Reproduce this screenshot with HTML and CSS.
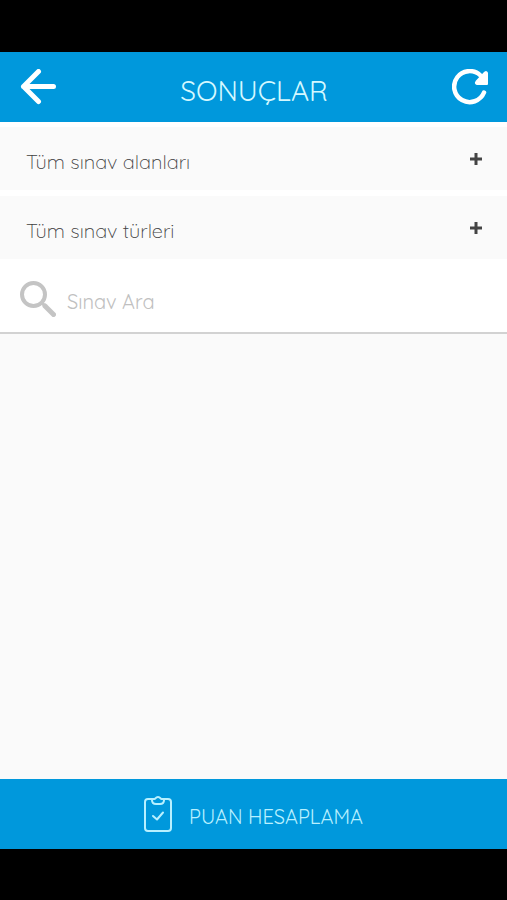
FILE: index.html
```html
<!DOCTYPE html>
<html lang="tr">
<head>
<meta charset="utf-8">
<meta name="viewport" content="width=device-width, initial-scale=1">
<title>Sonuçlar</title>
<link rel="stylesheet" href="styles.css">
</head>
<body>
<header class="topbar">
  <button class="icon-button" type="button" aria-label="Geri">
    <svg width="36" height="36" viewBox="0 0 36 36" fill="none" stroke="currentColor" stroke-width="5" stroke-linecap="round" stroke-linejoin="round"><path d="M33.500 17.500H3.500M18.500 2.500L3.500 17.500l15 15"/></svg>
  </button>
  <h1 class="title">SONUÇLAR</h1>
  <button class="icon-button" type="button" aria-label="Yenile">
    <svg width="36" height="36" viewBox="0 0 36 36"><path d="M32 23.500A15.500 15.500 0 1 1 28.500 6.500" fill="none" stroke="currentColor" stroke-width="4.500" stroke-linecap="round"/><path d="M35 4V15H25Q23 14.500 24.500 12.500L33 3.500Q34.500 2.500 35 4Z" fill="currentColor" stroke="currentColor" stroke-width="2" stroke-linejoin="round"/></svg>
  </button>
</header>
<main class="content">
  <div class="filters">
    <button class="filter" type="button"><span>Tüm sınav alanları</span><svg class="plus" width="12" height="12" viewBox="0 0 12 12"><path d="M6 0v12M0 6h12"/></svg></button>
    <button class="filter" type="button"><span>Tüm sınav türleri</span><svg class="plus" width="12" height="12" viewBox="0 0 12 12"><path d="M6 0v12M0 6h12"/></svg></button>
  </div>
  <label class="search">
    <svg width="36" height="36" viewBox="0 0 36 36" fill="none" stroke="currentColor"><circle cx="13.500" cy="13.500" r="11.500" stroke-width="4"/><path d="M22 22l3 3" stroke-width="3"/><path d="M25 25l8.500 8.500" stroke-width="5" stroke-linecap="round"/></svg>
    <input class="search-input" type="text" placeholder="Sınav Ara" aria-label="Sınav Ara">
  </label>
</main>
<footer class="footer">
  <button class="calculate" type="button">
    <svg width="28" height="36" viewBox="0 0 28 36" fill="none" stroke="currentColor" stroke-width="2" stroke-linecap="round" stroke-linejoin="round"><path d="M8 3H4a3 3 0 0 0-3 3v26a3 3 0 0 0 3 3h20a3 3 0 0 0 3-3V6a3 3 0 0 0-3-3h-4"/><path d="M8 3h2.500c1 0 1-2 3.500-2s2.500 2 3.500 2H20v1c0 2.500-1.500 4-4 4h-4c-2.500 0-4-1.500-4-4z"/><path d="M9 20l4 3.500 6-7"/></svg>
    <span>PUAN HESAPLAMA</span>
  </button>
</footer>
</body>
</html>
```
FILE: styles.css
```css
* {
  box-sizing: border-box;
}

body {
  margin: 0;
  min-height: 100vh;
  display: flex;
  flex-direction: column;
  border-top: 52px solid #000;
  border-bottom: 51px solid #000;
  background: #fafafa;
  font-family: Quicksand, Lato, sans-serif;
}

button {
  border: 0;
  padding: 0;
  background: none;
  color: inherit;
  font: inherit;
  cursor: pointer;
}

svg {
  display: block;
  flex: none;
}

.topbar {
  display: flex;
  align-items: center;
  justify-content: space-between;
  height: 70px;
  padding: 0 19px 0 20px;
  background: #0098dc;
  color: #fff;
}

.title {
  margin: 0;
  padding-top: 8px;
  color: #d4f8ff;
  font-size: 28px;
  font-weight: 400;
  line-height: 36px;
}

.content {
  flex: 1;
}

.filters {
  display: grid;
  gap: 6px;
  padding-top: 5px;
  background: #fff;
}

.filter {
  display: flex;
  align-items: center;
  justify-content: space-between;
  height: 63px;
  padding: 0 25px 0 26px;
  background: #fafafa;
  color: #404040;
  font-size: 20px;
  font-weight: 300;
  text-align: left;
}

.filter span {
  padding-top: 5px;
}

.plus {
  fill: none;
  stroke: #444;
  stroke-width: 3;
}

.search {
  display: flex;
  align-items: center;
  gap: 11px;
  height: 75px;
  padding: 6px 20px 0;
  border-bottom: 2px solid #d2d2d2;
  background: #fff;
  color: #c4c4c4;
}

.search-input {
  flex: 1;
  min-width: 0;
  padding: 6px 0 0;
  border: 0;
  outline: 0;
  background: none;
  color: #686868;
  font: inherit;
  font-size: 20px;
}

.search-input::placeholder {
  color: #c0c0c0;
  opacity: 1;
}

.footer {
  background: #0098dc;
  color: #b8f0ff;
}

.calculate {
  display: flex;
  align-items: center;
  justify-content: center;
  gap: 17px;
  width: 100%;
  height: 70px;
  font-size: 20px;
  font-weight: 400;
}

.calculate span {
  padding-top: 5px;
}
```
